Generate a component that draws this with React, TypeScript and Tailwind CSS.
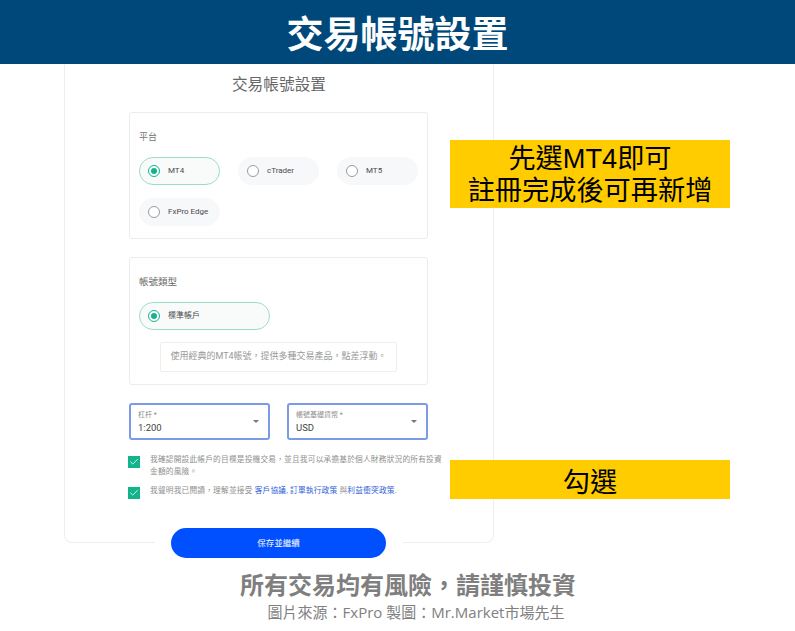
import { Check } from "lucide-react";

function Radio({ label, active, w = "w-[81px]" }: { label: string; active?: boolean; w?: string }) {
  return (
    <div
      className={`${w} h-[28px] rounded-full flex items-center pl-[8px] gap-[8px] border ${
        active ? "border-[#9adccb] bg-[#f9fbfb]" : "border-[#f7f8fa] bg-[#f7f8fa]"
      }`}
    >
      <span
        className={`w-[12px] h-[12px] rounded-full border flex items-center justify-center bg-white ${
          active ? "border-[#12b48c]" : "border-[#9b9b9b]"
        }`}
      >
        {active && <span className="w-[6px] h-[6px] rounded-full bg-[#12b48c]" />}
      </span>
      <span className="text-[8px] leading-none text-[#4a4a4a]">{label}</span>
    </div>
  );
}

function SelectBox({ label, value }: { label: string; value: string }) {
  return (
    <div className="w-[141px] h-[37px] rounded-[3px] border-2 border-[#7d9ae6] pl-[7px] pr-[9px] flex items-center justify-between">
      <div className="flex flex-col mt-[1px]">
        <span className="text-[7px] leading-[9px] text-[#8a8a8a]">{label}</span>
        <span className="text-[9.5px] leading-[13px] mt-[1px] text-[#444]">{value}</span>
      </div>
      <span className="w-0 h-0 border-x-[3px] border-x-transparent border-t-[3px] border-t-[#777]" />
    </div>
  );
}

function Tick() {
  return (
    <span className="w-[12px] h-[12px] shrink-0 bg-[#12b48c] flex items-center justify-center">
      <Check size={10} strokeWidth={2} color="#fff" />
    </span>
  );
}

export default function App() {
  return (
    <div className="w-[795px] h-[631px] bg-white overflow-hidden font-['Roboto','Noto_Sans_CJK_TC',sans-serif]">
      <header className="h-16 bg-[#00487a] flex items-center justify-center pt-[6px]">
        <h1 className="text-[37px] leading-none font-bold text-white">交易帳號設置</h1>
      </header>

      <div className="flex items-start h-[494px]">
        {/* signup card */}
        <div className="ml-[64px] w-[430px] h-[479px] shrink-0 rounded-b-lg border border-t-0 border-[#eeeeee] flex flex-col">
          <h2 className="mt-[10px] h-[22px] shrink-0 text-center text-[15.7px] leading-[22px] text-[#666]">交易帳號設置</h2>

          <section className="mt-[16px] ml-[64px] w-[299px] h-[127px] shrink-0 rounded-[3px] border border-[#ececec] pl-[9px] pt-[18px]">
            <div className="text-[9px] leading-[12px] text-[#777]">平台</div>
            <div className="mt-[14px] flex flex-wrap w-[285px] gap-x-[18px] gap-y-[13px]">
              <Radio label="MT4" active />
              <Radio label="cTrader" />
              <Radio label="MT5" />
              <Radio label="FxPro Edge" />
            </div>
          </section>

          <section className="mt-[18px] ml-[64px] w-[299px] h-[128px] shrink-0 rounded-[3px] border border-[#ececec] pl-[9px] pt-[17px]">
            <div className="text-[9.5px] leading-[13px] text-[#666]">帳號類型</div>
            <div className="mt-[14px]">
              <Radio label="標準帳戶" active w="w-[131px]" />
            </div>
            <div className="mt-[12px] ml-[21px] w-[237px] h-[30px] rounded-[2px] border border-[#eeeeee] flex items-center justify-center text-[9px] text-[#999]">
              使用經典的MT4帳號，提供多種交易產品，點差浮動。
            </div>
          </section>

          <div className="mt-[18px] ml-[64px] w-[299px] shrink-0 flex justify-between">
            <SelectBox label="杠杆 *" value="1:200" />
            <SelectBox label="帳號基礎貨幣 *" value="USD" />
          </div>

          <div className="mt-[15px] ml-[63px] shrink-0 flex gap-[10px]">
            <div className="mt-[1px]"><Tick /></div>
            <p className="w-[296px] text-[7.7px] tracking-[0.2px] leading-[12px] text-[#8f8f8f] -mt-[1px]">
              我確認開設此帳戶的目標是投機交易，並且我可以承擔基於個人財務狀況的所有投資金額的風險。
            </p>
          </div>
          <div className="mt-[8px] ml-[63px] shrink-0 flex gap-[10px]">
            <div className="mt-[1px]"><Tick /></div>
            <p className="text-[7.7px] tracking-[0.2px] leading-[12px] text-[#8f8f8f] -mt-[1px]">
              我聲明我已閱讀，理解並接受 <span className="text-[#2f62d8]">客戶協議, 訂單執行政策</span> 與
              <span className="text-[#2f62d8]">利益衝突政策.</span>
            </p>
          </div>

          <div className="mt-[29px] ml-[90px] w-[248px] bg-white px-4 h-[30px] shrink-0">
            <button className="w-[215px] h-[30px] rounded-full bg-[#0050ff] text-white text-[8.5px]">保存並繼續</button>
          </div>
        </div>

        {/* notes beside the card */}
        <div className="ml-[-44px] w-[280px] shrink-0 font-['Liberation_Sans','Noto_Sans_CJK_TC',sans-serif]">
          <div className="mt-[76px] h-[68px] bg-[#ffcc00] text-center text-[27.2px] leading-[32px] pt-[3px] text-black">
            先選MT4即可
            <br />
            註冊完成後可再新增
          </div>
          <div className="mt-[252px] h-[39px] bg-[#ffcc00] text-center text-[27.2px] leading-[39px] pt-[3px] text-black">勾選</div>
        </div>
      </div>

      <footer className="mt-[12px] pl-[21px] text-center font-['Open_Sans','Noto_Sans_CJK_TC',sans-serif]">
        <div className="text-[24px] leading-[30px] font-bold text-[#7f7f7f]">所有交易均有風險，請謹慎投資</div>
        <div className="mt-[2px] pl-[16px] text-[15px] leading-[20px] text-[#808080]">圖片來源：FxPro 製圖：Mr.Market市場先生</div>
      </footer>
    </div>
  );
}
